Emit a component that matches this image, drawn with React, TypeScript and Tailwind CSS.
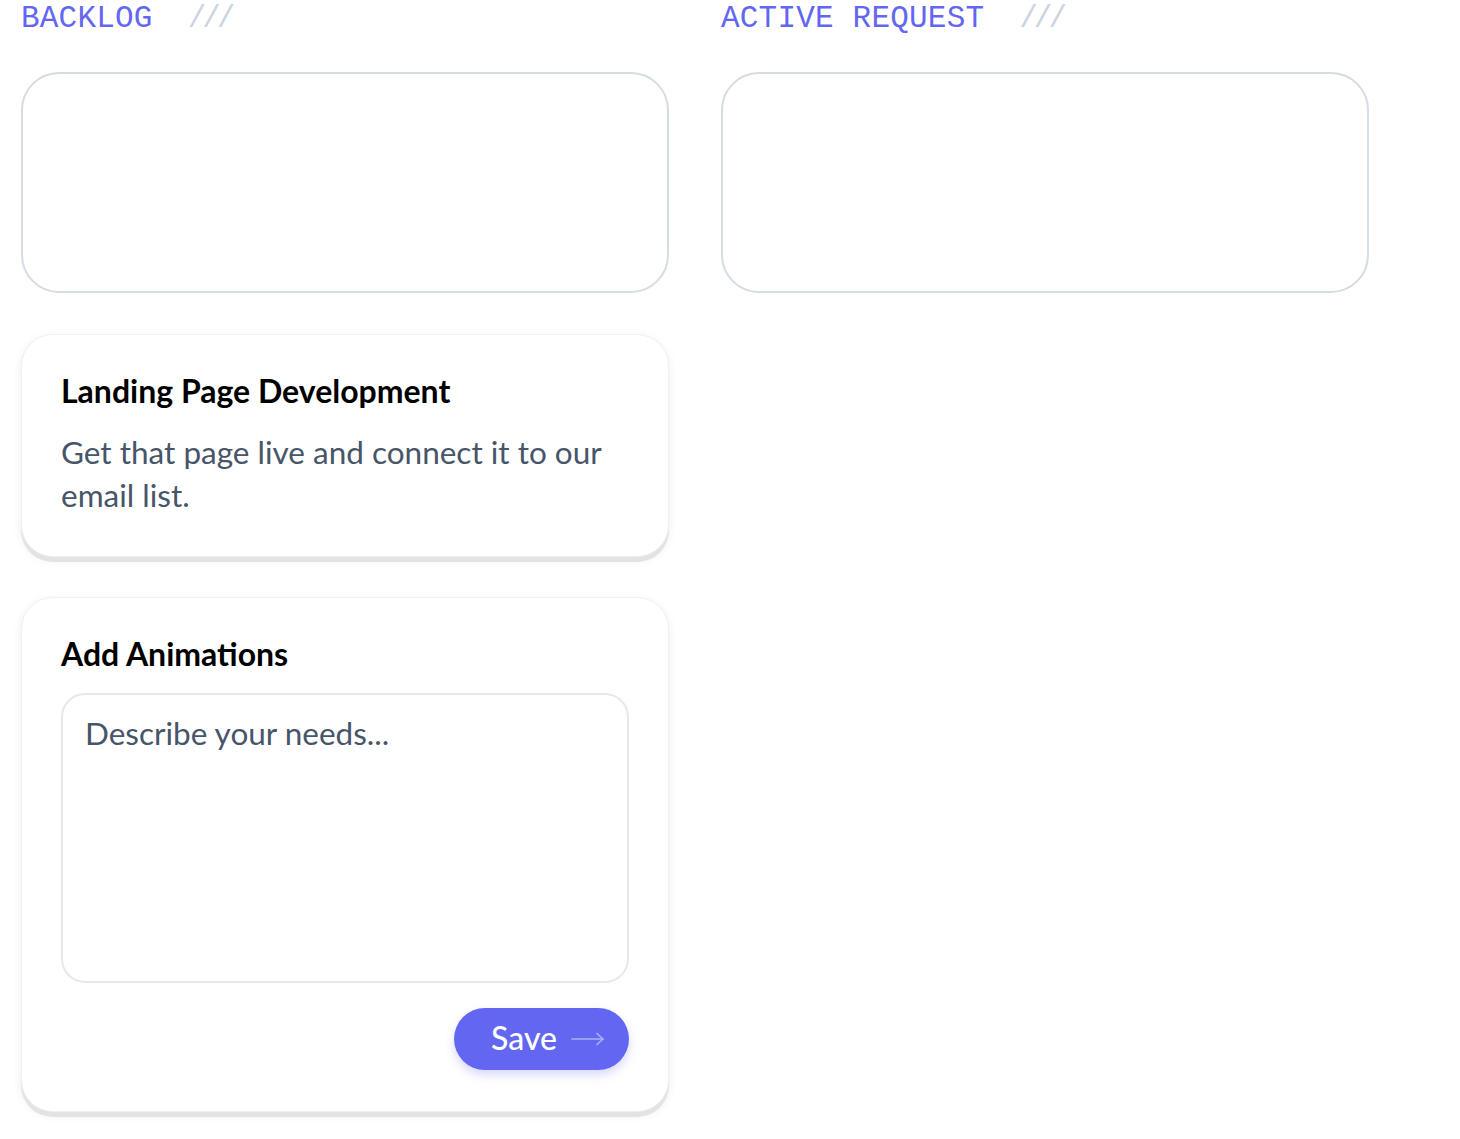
import React from "react";

function Header({ label }: { label: string }) {
  return (
    <div className="flex items-center gap-[35px] h-[36px] mt-[1px] font-['Liberation_Mono',monospace] text-[31px] leading-[36px] tracking-[0.2px]">
      <span className="text-[#6366f1]">{label}</span>
      <span className="text-[#cbd5e1] tracking-[-4px]">///</span>
    </div>
  );
}

function Arrow() {
  return (
    <svg width="34" height="16" viewBox="0 0 34 16" fill="none" className="text-[#a5b4fc]">
      <path d="M1 8H32" stroke="currentColor" strokeWidth="1.6" strokeLinecap="round" />
      <path d="M26 2.5L32 8L26 13.5" stroke="currentColor" strokeWidth="1.6" strokeLinecap="round" strokeLinejoin="round" />
    </svg>
  );
}

export default function App() {
  return (
    <div className="min-h-[1139px] w-[1460px] bg-white font-['Lato','Noto_Sans',sans-serif]">
      <div className="flex gap-[52px] pl-[21px]">
        <div className="w-[648px] flex flex-col">
          <Header label="BACKLOG" />
          <div className="mt-[35px] h-[221px] rounded-[38px] border-2 border-[#d5dce4]" />
          <div className="mt-[41px] rounded-[32px] border border-[#eef0f3] bg-white px-[39px] pt-[38px] pb-[39px] shadow-[0_5px_0_0_#e3e3e5,0_3px_10px_rgba(15,23,42,0.08)]">
            <div className="text-[32px] leading-9 font-bold text-black">Landing Page Development</div>
            <div className="mt-[22px] text-[31.5px] leading-[43px] text-[#475569]">
              Get that page live and connect it to our email list.
            </div>
          </div>
          <div className="mt-[40px] rounded-[32px] border border-[#eef0f3] bg-white px-[39px] pt-[38px] pb-[41px] shadow-[0_5px_0_0_#e3e3e5,0_3px_10px_rgba(15,23,42,0.08)]">
            <div className="text-[32px] leading-9 font-bold text-black">Add Animations</div>
            <div className="mt-[21px] h-[290px] rounded-[24px] border-2 border-[#e5e9ef] px-[22px] pt-[17px]">
              <div className="text-[31.5px] leading-[43px] text-[#475569]">Describe your needs...</div>
            </div>
            <div className="mt-[25px] flex justify-end">
              <button className="flex h-[62px] items-center gap-[14px] rounded-full bg-[#6366f1] pl-[37px] pr-[24px] text-[32px] font-medium text-white shadow-[0_5px_10px_rgba(99,102,241,0.25)]">
                <span className="leading-none -mt-[2px]">Save</span>
                <Arrow />
              </button>
            </div>
          </div>
        </div>
        <div className="w-[648px] flex flex-col">
          <Header label="ACTIVE REQUEST" />
          <div className="mt-[35px] h-[221px] rounded-[38px] border-2 border-[#d5dce4]" />
        </div>
      </div>
    </div>
  );
}
